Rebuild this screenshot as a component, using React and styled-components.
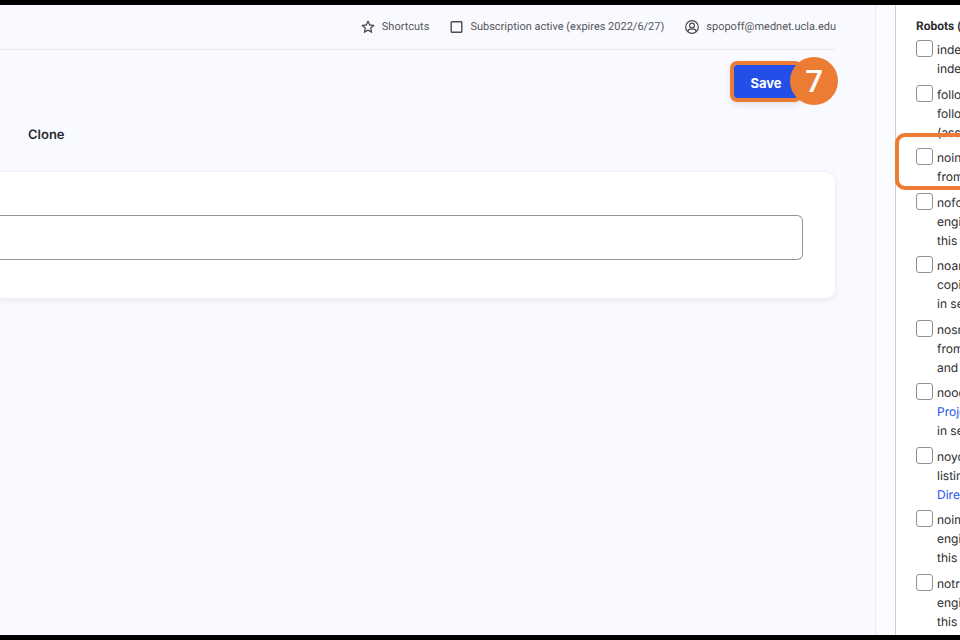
import React from "react";
import styled, { createGlobalStyle } from "styled-components";

const GlobalStyle = createGlobalStyle`
  * {
    box-sizing: border-box;
  }

  body {
    margin: 0;
    overflow: hidden;
    background: #f9faff;
    color: #2b2c31;
    font-family: Inter, "Liberation Sans", sans-serif;
    text-rendering: geometricPrecision;
  }
`;

const Page = styled.div`
  display: flex;
  height: 100vh;
  overflow: hidden;
  border-top: 5px solid #000000;
  border-bottom: 5px solid #000000;
`;

const Main = styled.main`
  flex: 1;
  min-width: 0;
  padding-right: 39px;
`;

const Toolbar = styled.nav`
  display: flex;
  justify-content: flex-end;
  align-items: center;
  gap: 21px;
  height: 45px;
  padding-bottom: 1px;
  border-bottom: 1px solid #e9eaf0;
`;

const ToolbarLink = styled.a`
  display: flex;
  align-items: center;
  gap: 7px;
  color: #55565b;
  font-family: Roboto, Inter, sans-serif;
  font-size: 11px;
  line-height: 16px;
  text-decoration: none;
  white-space: nowrap;

  svg {
    fill: none;
    stroke: #4c4d52;
  }
`;

const Actions = styled.div`
  display: flex;
  justify-content: flex-end;
  padding: 11px 34px 0 0;
`;

const Highlight = styled.div`
  position: relative;
  border: 4px solid #ec7c33;
  border-radius: 7px;
  box-shadow: 0 3px 6px rgba(60, 60, 140, 0.12);
`;

const SaveButton = styled.button`
  display: block;
  width: 64px;
  height: 33px;
  padding: 2px 0 0;
  border: 0;
  border-radius: 3px;
  background: #234fe8;
  color: #ffffff;
  font-family: inherit;
  font-size: 13px;
  font-weight: 700;
`;

const StepBadge = styled.span`
  position: absolute;
  top: -8px;
  right: -40px;
  width: 48px;
  height: 48px;
  border-radius: 50%;
  background: #ec7c33;
  color: #ffffff;
  font-family: "Open Sans", sans-serif;
  font-size: 31px;
  font-weight: 600;
  line-height: 48px;
  text-align: center;
`;

const Tabs = styled.div`
  padding: 21px 28px 26px;
`;

const Tab = styled.a`
  display: inline-block;
  color: #2b2c31;
  font-size: 13px;
  font-weight: 600;
  line-height: 20px;
  text-decoration: none;
`;

const Card = styled.section`
  height: 128px;
  padding: 43px 32px 0 0;
  border: 1px solid #f0f1f6;
  border-left: 0;
  border-radius: 0 10px 10px 0;
  background: #ffffff;
  box-shadow: 0 2px 5px rgba(40, 40, 90, 0.07);
`;

const Field = styled.input`
  display: block;
  width: 100%;
  height: 45px;
  padding: 0 16px;
  border: 1px solid #93949a;
  border-left: 0;
  border-radius: 0 6px 6px 0;
  background: #ffffff;
  font: inherit;
`;

const Gutter = styled.div`
  width: 20px;
  border-left: 1px solid #ebecf2;
  background: #fbfcff;
`;

const Sidebar = styled.aside`
  position: relative;
  width: 65px;
  padding: 12px 0 0 20px;
  border-left: 1px solid #cdced3;
  background: #ffffff;
  white-space: nowrap;
`;

const SidebarTitle = styled.h2`
  margin: 0 0 4px;
  font-family: Roboto, Inter, sans-serif;
  font-size: 12px;
  font-weight: 700;
  line-height: 19px;
`;

const List = styled.ul`
  margin: 0;
  padding: 0;
  list-style: none;
`;

const Item = styled.li`
  display: flex;
  gap: 4px;
  margin-bottom: 6px;
  font-size: 12px;
  line-height: 19px;

  &:nth-child(odd) {
    margin-bottom: 7px;
  }
`;

const Checkbox = styled.input`
  flex: none;
  appearance: none;
  width: 17px;
  height: 17px;
  margin: 0;
  border: 1px solid #909197;
  border-radius: 3px;
  background: #ffffff;
`;

const Line = styled.span`
  display: block;
`;

const InlineLink = styled.a`
  color: #2454ea;
  text-decoration: none;
`;

const ItemHighlight = styled.div`
  position: absolute;
  top: 128px;
  left: -1px;
  width: 80px;
  height: 57px;
  border: 4px solid #ec7c33;
  border-radius: 10px;
  pointer-events: none;
`;

const robots = [
  { id: "index", lines: ["index", "index"] },
  { id: "follow", lines: ["follow", "follow", "(assumed)"] },
  { id: "noindex", lines: ["noindex", "from"] },
  { id: "nofollow", lines: ["nofollow", "engines", "this"] },
  { id: "noarchive", lines: ["noarchive", "copies", "in search"] },
  { id: "nosnippet", lines: ["nosnippet", "from", "and"] },
  { id: "noodp", lines: ["noodp", "Project", "in search"], link: 1 },
  { id: "noydir", lines: ["noydir", "listing", "Directory"], link: 2 },
  { id: "noimageindex", lines: ["noimageindex", "engines", "this"] },
  { id: "notranslate", lines: ["notranslate", "engines", "this"] },
];

const StarIcon = () => (
  <svg width="14" height="14" viewBox="0 0 14 14" strokeWidth="1.3" strokeLinejoin="round">
    <path d="M7 1.2 8.7 5l4.1.4-3.1 2.7.9 4.2L7 10.1l-3.6 2.2.9-4.2L1.2 5.4 5.3 5z" />
  </svg>
);

const SquareIcon = () => (
  <svg width="13" height="14" viewBox="0 0 13 14" strokeWidth="1.4">
    <rect x="1.2" y="1.7" width="10.6" height="10.6" rx="0.6" />
  </svg>
);

const UserIcon = () => (
  <svg width="14" height="14" viewBox="0 0 14 14" strokeWidth="1.2">
    <circle cx="7" cy="7" r="6.3" />
    <circle cx="7" cy="5.5" r="2.4" />
    <path d="M3.1 11.8v-.5c0-1.3.9-2.1 2.1-2.1h3.6c1.2 0 2.1.8 2.1 2.1v.5" />
  </svg>
);

export default function App() {
  return (
    <>
      <GlobalStyle />
      <Page>
        <Main>
          <Toolbar>
            <ToolbarLink href="#shortcuts">
              <StarIcon />
              Shortcuts
            </ToolbarLink>
            <ToolbarLink href="#subscription">
              <SquareIcon />
              Subscription active (expires 2022/6/27)
            </ToolbarLink>
            <ToolbarLink href="#account">
              <UserIcon />
              spopoff@mednet.ucla.edu
            </ToolbarLink>
          </Toolbar>
          <Actions>
            <Highlight>
              <SaveButton type="button">Save</SaveButton>
              <StepBadge>7</StepBadge>
            </Highlight>
          </Actions>
          <Tabs>
            <Tab href="#clone">Clone</Tab>
          </Tabs>
          <Card>
            <Field type="text" aria-label="Title" />
          </Card>
        </Main>
        <Gutter />
        <Sidebar>
          <SidebarTitle>Robots (</SidebarTitle>
          <List>
            {robots.map(({ id, lines, link }) => (
              <Item key={id}>
                <Checkbox type="checkbox" id={id} />
                <label htmlFor={id}>
                  {lines.map((line, i) => (
                    <Line key={i}>
                      {i === link ? <InlineLink href="#directory">{line}</InlineLink> : line}
                    </Line>
                  ))}
                </label>
              </Item>
            ))}
          </List>
          <ItemHighlight />
        </Sidebar>
      </Page>
    </>
  );
}
